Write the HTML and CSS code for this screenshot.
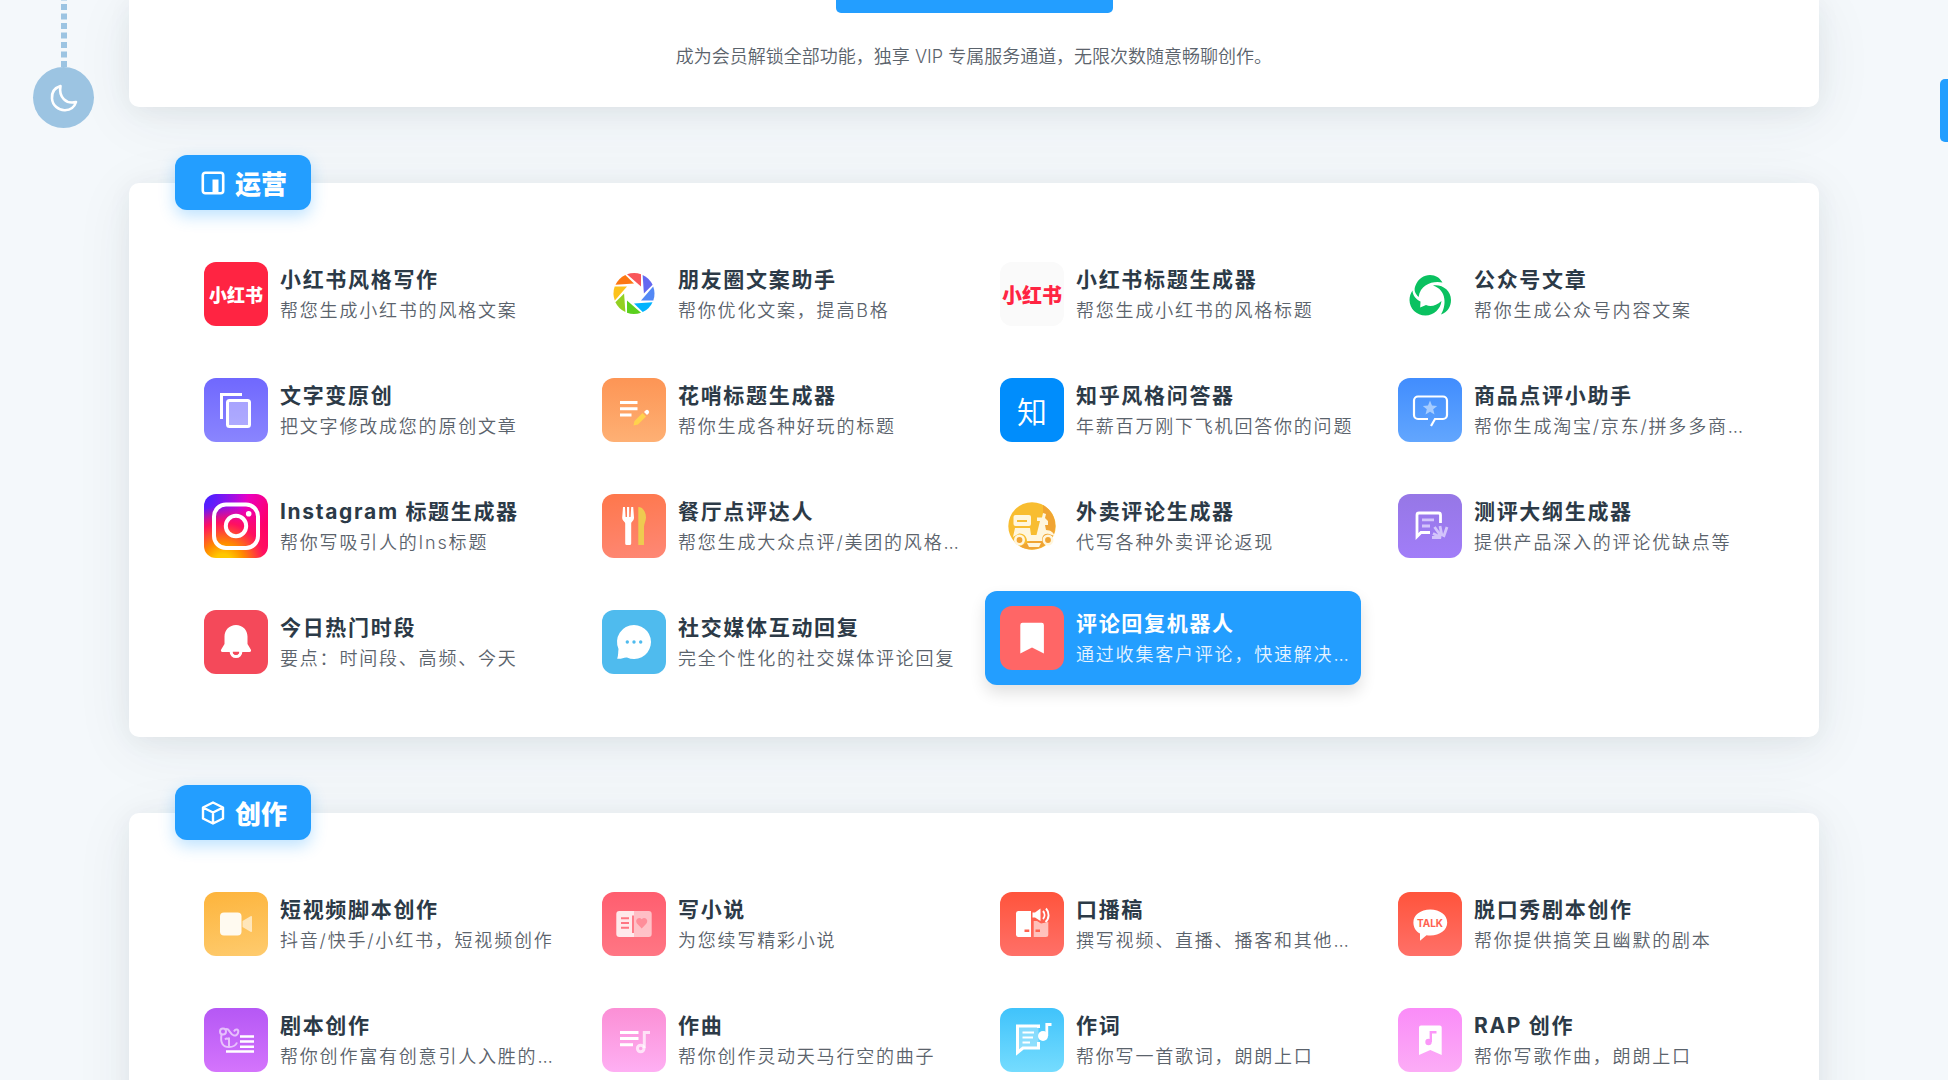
FILE: index.html
```html
<!DOCTYPE html>
<html lang="zh-CN">
<head>
    <meta charset="utf-8">
    <title>AI 创作</title>
    <link rel="stylesheet" href="styles.css">
</head>
<body>
    <!-- dark mode pull switch -->
    <div class="pull">
        <svg class="pull-rope" width="6" height="67" viewBox="0 0 6 67"><path d="M3 67V0" stroke="#9cc4e2" stroke-width="6" stroke-dasharray="6 3.5"/></svg>
        <button class="pull-btn" aria-label="夜间模式">
            <svg width="32" height="32" viewBox="0 0 32 32" fill="none" stroke="#fff" stroke-width="2.6" stroke-linejoin="round"><path d="M12.500 4C6 6 3.600 11 4 16.500C4.500 23.500 10.500 28.500 17 28.200C22.500 28 26.500 25 28 20C18 22.500 10.500 15 12.500 4Z"/></svg>
        </button>
    </div>
    <button class="side-tab" aria-label="侧边栏"></button>

    <main>
        <section class="card vip">
            <button class="vip-btn" aria-label="开通会员"></button>
            <p>成为会员解锁全部功能，独享 VIP 专属服务通道，无限次数随意畅聊创作。</p>
        </section>

        <section class="card">
            <h2 class="tab">
                <svg width="24" height="24" viewBox="0 0 24 24"><rect x="1.800" y="1.800" width="20.400" height="20.400" rx="2.500" fill="none" stroke="#fff" stroke-width="2.600"/><path d="M11.500 8.500h6V22h-6z" fill="#fff"/></svg>
                运营
            </h2>
            <div class="grid">
                <a class="item" href="#">
                    <span class="icon xhs">小红书</span>
                    <span class="info"><b>小红书风格写作</b><span class="desc">帮您生成小红书的风格文案</span></span>
                </a>
                <a class="item" href="#">
                    <svg class="icon" viewBox="0 0 64 64">
                        <defs><path id="blade" d="M-7 -19.200L7 -7V-19.300A20.500 20.500 0 0 0 -7 -19.200Z"/></defs>
                        <g transform="translate(32 31.500)">
                            <use href="#blade" fill="#f9565a"/>
                            <use href="#blade" fill="#6467f0" transform="rotate(45)"/>
                            <use href="#blade" fill="#5388f5" transform="rotate(90)"/>
                            <use href="#blade" fill="#00b3fe" transform="rotate(135)"/>
                            <use href="#blade" fill="#5bd01e" transform="rotate(180)"/>
                            <use href="#blade" fill="#93d021" transform="rotate(225)"/>
                            <use href="#blade" fill="#fcc21b" transform="rotate(270)"/>
                            <use href="#blade" fill="#fd7712" transform="rotate(315)"/>
                        </g>
                    </svg>
                    <span class="info"><b>朋友圈文案助手</b><span class="desc">帮你优化文案，提高B格</span></span>
                </a>
                <a class="item" href="#">
                    <span class="icon xhs-light">小红书</span>
                    <span class="info"><b>小红书标题生成器</b><span class="desc">帮您生成小红书的风格标题</span></span>
                </a>
                <a class="item" href="#">
                    <svg class="icon" viewBox="0 0 64 64" fill="#0ac160">
                        <path d="M20.600 35C17 31.500 15.500 28 17.500 23.500C20 17 26 13 32 13C37.500 13 42 15.800 44.500 20.600C35.500 18.500 22.500 22 20.600 35Z"/>
                        <path d="M35 23.600C44 22 53 28.500 53 38C53 44.500 49.500 50.500 43 52.500C48.500 44 49 28 35 23.600Z"/>
                        <path d="M14.500 28.500C14.500 33.500 18.500 37.500 22.500 39.600L22.200 45.500L28 43C33 45.500 38 43.500 43.500 39C42.500 47 36 53.500 27.500 53.500C18.500 53.500 11.500 46.500 11.500 38C11.500 34.500 12.500 31.500 14.500 28.500Z"/>
                    </svg>
                    <span class="info"><b>公众号文章</b><span class="desc">帮你生成公众号内容文案</span></span>
                </a>

                <a class="item" href="#">
                    <svg class="icon bg-indigo" viewBox="0 0 64 64" fill="none" stroke="#fff" stroke-width="3">
                        <path d="M38 16.500H17.500V41"/>
                        <rect x="23.500" y="22.500" width="22" height="26" rx="2" fill="#fff" fill-opacity=".35"/>
                    </svg>
                    <span class="info"><b>文字变原创</b><span class="desc">把文字修改成您的原创文章</span></span>
                </a>
                <a class="item" href="#">
                    <svg class="icon bg-orange" viewBox="0 0 64 64" fill="none" stroke-width="3">
                        <path d="M18 24.500H35.500M18 30.700H35.500M18 37H29.500" stroke="#fff"/>
                        <path d="M31.500 47.500L32.500 43L40.500 35L44 38.500L36 46.500Z" fill="#ffd24d"/>
                        <path d="M42 34L43.500 32.500A2 2 0 0 1 46.500 35.500L45 37Z" fill="#fff"/>
                    </svg>
                    <span class="info"><b>花哨标题生成器</b><span class="desc">帮你生成各种好玩的标题</span></span>
                </a>
                <a class="item" href="#">
                    <span class="icon zhihu">知</span>
                    <span class="info"><b>知乎风格问答器</b><span class="desc">年薪百万刚下飞机回答你的问题</span></span>
                </a>
                <a class="item" href="#">
                    <svg class="icon bg-blue" viewBox="0 0 64 64" fill="none">
                        <path d="M30 41H20a4 4 0 0 1 -4 -4V22.500a4 4 0 0 1 4 -4H45a4 4 0 0 1 4 4V37a4 4 0 0 1 -4 4H37L33 48" stroke="#fff" stroke-width="2.200"/>
                        <path d="M32 22.500l2 5 5.200.4-4 3.400 1.300 5.200-4.500-2.800-4.500 2.800 1.300-5.200-4-3.400 5.200-.4z" fill="#a5ccff"/>
                    </svg>
                    <span class="info"><b>商品点评小助手</b><span class="desc">帮你生成淘宝/京东/拼多多商品点评</span></span>
                </a>

                <a class="item" href="#">
                    <svg class="icon bg-ins" viewBox="0 0 64 64" fill="none" stroke="#fff" stroke-width="4">
                        <rect x="10" y="10.500" width="44" height="43.500" rx="12"/>
                        <circle cx="32" cy="32" r="10.200"/>
                        <circle cx="44.700" cy="19.700" r="2.800" fill="#fff" stroke="none"/>
                    </svg>
                    <span class="info"><b>Instagram 标题生成器</b><span class="desc">帮你写吸引人的Ins标题</span></span>
                </a>
                <a class="item" href="#">
                    <svg class="icon bg-coral" viewBox="0 0 64 64">
                        <path d="M21 13h2l.600 10h1.400V13h2.200V23h1.400L29.200 13h2L32 23.500C32 27 29.200 27.500 29.200 29.500V49.500a1.600 1.600 0 0 1 -1.600 1.600H24.800a1.600 1.600 0 0 1 -1.600 -1.600V29.500C23.200 27.500 20.200 27 20.200 23.500Z" fill="#fff"/>
                        <path d="M36.300 13C41 13 44 18 44 23.500C44 27.500 42 29 42 33V51H36.300Z" fill="#eecb50"/>
                    </svg>
                    <span class="info"><b>餐厅点评达人</b><span class="desc">帮您生成大众点评/美团的风格点评文案</span></span>
                </a>
                <a class="item" href="#">
                    <svg class="icon" viewBox="0 0 64 64">
                        <circle cx="32" cy="32" r="23.700" fill="#f8bd30"/>
                        <path d="M43 11A23.700 23.700 0 0 1 20 52.500L43 40Z" fill="#f0a433"/>
                        <g fill="#fff6dd">
                            <rect x="13.500" y="21" width="17.500" height="11" rx="2"/>
                            <path d="M15 34H30L31 41H36.500L40 27H37V23.500H42L43 19L46 20L45 24L48 27V31H45L46 36C51 36 54 39 54.500 42L49 40C44 39 42 42 42 47H27C27 42 23 39 19 39.500L13 43Z"/>
                            <path d="M27 49H41L39 53H29Z"/>
                        </g>
                        <path d="M17 27H27" stroke="#f8bd30" stroke-width="1.800"/>
                        <circle cx="19.500" cy="46" r="4.200" fill="#f0a433" stroke="#fff6dd" stroke-width="2.600"/>
                        <circle cx="48" cy="46" r="4.200" fill="#f0a433" stroke="#fff6dd" stroke-width="2.600"/>
                    </svg>
                    <span class="info"><b>外卖评论生成器</b><span class="desc">代写各种外卖评论返现</span></span>
                </a>
                <a class="item" href="#">
                    <svg class="icon bg-violet" viewBox="0 0 64 64" fill="none" stroke-width="2.800">
                        <path d="M32 38.500H23L19 42.500V21a2 2 0 0 1 2 -2H40.500a2 2 0 0 1 2 2V29" stroke="#fff"/>
                        <path d="M24 25.800H36M24 32H32" stroke="#d3c4fb"/>
                        <path d="M36.500 33L43 42M42 32L44 42M49 33L45.500 43M35 39.500L43 43.500H34" stroke="#d3c4fb"/>
                    </svg>
                    <span class="info"><b>测评大纲生成器</b><span class="desc">提供产品深入的评论优缺点等</span></span>
                </a>

                <a class="item" href="#">
                    <svg class="icon bg-red" viewBox="0 0 64 64" fill="#fff">
                        <path d="M32 15C38.500 15 43.500 20 43.500 26.500V34L46.800 39.500C47.600 41 46.800 42 45.500 42H18.500C17.200 42 16.400 41 17.200 39.500L20.500 34V26.500C20.500 20 25.500 15 32 15Z"/>
                        <path d="M27.200 41.500a4.800 5 0 0 0 9.600 0" fill="none" stroke="#fff" stroke-width="3.200"/>
                        <path d="M28.800 41.800h6.400a3.200 2.800 0 0 1 -6.400 0z" fill="#f4495a"/>
                    </svg>
                    <span class="info"><b>今日热门时段</b><span class="desc">要点：时间段、高频、今天</span></span>
                </a>
                <a class="item" href="#">
                    <svg class="icon bg-sky" viewBox="0 0 64 64" fill="#fff">
                        <path d="M32 15A17 17 0 1 1 25 47.500C22 47 19 49.500 15.200 48.700C16.500 45 16 42 16.500 39A17 17 0 0 1 32 15Z"/>
                        <g fill="#4fbbee"><circle cx="25.300" cy="32" r="1.700"/><circle cx="32" cy="32" r="1.700"/><circle cx="38.700" cy="32" r="1.700"/></g>
                    </svg>
                    <span class="info"><b>社交媒体互动回复</b><span class="desc">完全个性化的社交媒体评论回复</span></span>
                </a>
                <a class="item active" href="#">
                    <svg class="icon bg-rose" viewBox="0 0 64 64" fill="#fff">
                        <path d="M22.500 16.700h19.200a2.200 2.200 0 0 1 2.200 2.200V47.500L32 41.500L20.300 47.500V18.900a2.200 2.200 0 0 1 2.200 -2.200z"/>
                    </svg>
                    <span class="info"><b>评论回复机器人</b><span class="desc">通过收集客户评论，快速解决客户问题</span></span>
                </a>
            </div>
        </section>

        <section class="card">
            <h2 class="tab">
                <svg width="24" height="24" viewBox="0 0 24 24" fill="none" stroke="#fff" stroke-width="2.400" stroke-linejoin="round"><path d="M12 1.500L22 6.500V17.500L12 22.500L2 17.500V6.500ZM2 6.500L12 11.500L22 6.500M12 11.500V22.500"/></svg>
                创作
            </h2>
            <div class="grid">
                <a class="item" href="#">
                    <svg class="icon bg-amber" viewBox="0 0 64 64" fill="#fffaf0">
                        <rect x="16" y="20.500" width="21.500" height="23" rx="4"/>
                        <path d="M38.500 29L46.500 24.200Q48 23.500 48 25V39Q48 40.500 46.500 39.800L38.500 35Z" opacity=".65"/>
                    </svg>
                    <span class="info"><b>短视频脚本创作</b><span class="desc">抖音/快手/小红书，短视频创作</span></span>
                </a>
                <a class="item" href="#">
                    <svg class="icon bg-pinkred" viewBox="0 0 64 64" fill="#fff">
                        <path d="M17.300 19H32V45H17.300a3 3 0 0 1 -3 -3V22a3 3 0 0 1 3 -3z" opacity=".85"/>
                        <path d="M32 19H46.700a3 3 0 0 1 3 3V42a3 3 0 0 1 -3 3H32z" opacity=".58"/>
                        <path d="M19 26.300H27M19 31H27M19 35.700H27M31 23.500V41" stroke="#ff7583" stroke-width="1.900"/>
                        <path d="M39.700 36.500L35.500 32C32 28.500 36.500 24 39.700 27.200C43 24 47.500 28.500 44 32Z" fill="#ff8d99"/>
                    </svg>
                    <span class="info"><b>写小说</b><span class="desc">为您续写精彩小说</span></span>
                </a>
                <a class="item" href="#">
                    <svg class="icon bg-tomato" viewBox="0 0 64 64" fill="#fff">
                        <path d="M18.500 19H31V45H18.500a2.500 2.500 0 0 1 -2.500 -2.500V21.500a2.500 2.500 0 0 1 2.500 -2.500z"/>
                        <path d="M33.700 29H37L41 31.500L48.300 30V42.500a2.500 2.500 0 0 1 -2.500 2.500H33.700z" opacity=".6"/>
                        <path d="M24.500 38.700H29.300M35.500 38.700H40" stroke="#ff6350" stroke-width="2.400"/>
                        <path d="M32.500 20.500H35L40.500 16.500V29L35 25.500H32.500Z"/>
                        <path d="M43 19a6 6 0 0 1 0 8M46 16.500a9.500 9.500 0 0 1 -.500 13.500" fill="none" stroke="#fff" stroke-width="1.900"/>
                    </svg>
                    <span class="info"><b>口播稿</b><span class="desc">撰写视频、直播、播客和其他口播稿件</span></span>
                </a>
                <a class="item" href="#">
                    <svg class="icon bg-tomato" viewBox="0 0 64 64" fill="#fff">
                        <path d="M32.300 17.500C42 17.500 49.200 23 49.200 30.500C49.200 38 42 43.500 32.300 43.500C31 43.500 29.500 43.400 28.500 43.200L22 48.700V41.500C18 39.500 15.400 35.500 15.400 30.500C15.400 23 22.500 17.500 32.300 17.500Z"/>
                        <text class="talk" x="32" y="34.500">TALK</text>
                    </svg>
                    <span class="info"><b>脱口秀剧本创作</b><span class="desc">帮你提供搞笑且幽默的剧本</span></span>
                </a>

                <a class="item" href="#">
                    <svg class="icon bg-purple" viewBox="0 0 64 64" fill="none" stroke="#fff" stroke-width="2.400">
                        <path d="M36 28.500H50M36 33.500H50M36 38.700H50M22 43.500H50"/>
                        <g stroke-width="2" opacity=".6">
                            <circle cx="19" cy="23.500" r="3"/>
                            <path d="M21.500 21.500C25 19 26 27 30 27.500C34 28 35.500 22.500 33 21.500C31 21 30.500 22.500 30 23.500M17.500 26.500C16 35 19 39 25 39C29 39 32 37 33 34.500M25 29.500V39M21 31.500C22 30.500 23.500 30.500 24.500 31"/>
                        </g>
                    </svg>
                    <span class="info"><b>剧本创作</b><span class="desc">帮你创作富有创意引人入胜的剧本内容</span></span>
                </a>
                <a class="item" href="#">
                    <svg class="icon bg-pink" viewBox="0 0 64 64" fill="none" stroke="#fff" stroke-width="3">
                        <path d="M18 24.500H36.500M18 30.500H36.500M18 36.700H31"/>
                        <path d="M48 24.500H42.300V40" opacity=".7"/>
                        <circle cx="38.700" cy="40.500" r="3.300" opacity=".7"/>
                    </svg>
                    <span class="info"><b>作曲</b><span class="desc">帮你创作灵动天马行空的曲子</span></span>
                </a>
                <a class="item" href="#">
                    <svg class="icon bg-cyan" viewBox="0 0 64 64" fill="none" stroke="#fff" stroke-width="3">
                        <path d="M38.500 20V18H17.500V44.500L23 40H38.500V34" fill="#fff" fill-opacity=".3"/>
                        <path d="M22.500 24.500H34M22.500 29.500H33M22.500 34.500H30" stroke-width="2.200"/>
                        <circle cx="43" cy="28" r="5" fill="#fff" stroke="none"/>
                        <path d="M46.800 28V16.500H51.500" stroke-width="2.800"/>
                    </svg>
                    <span class="info"><b>作词</b><span class="desc">帮你写一首歌词，朗朗上口</span></span>
                </a>
                <a class="item" href="#">
                    <svg class="icon bg-orchid" viewBox="0 0 64 64">
                        <path d="M23 17.500H41.700a2 2 0 0 1 2 2V47L32.300 42L21 47V19.500a2 2 0 0 1 2 -2z" fill="#fff"/>
                        <circle cx="30.500" cy="34" r="3.200" fill="#fb97f8"/>
                        <path d="M32.800 34V24.200H38.500" fill="none" stroke="#fb97f8" stroke-width="2.400"/>
                    </svg>
                    <span class="info"><b>RAP 创作</b><span class="desc">帮你写歌作曲，朗朗上口</span></span>
                </a>
            </div>
        </section>
    </main>
</body>
</html>
```
FILE: styles.css
```css
* {
    box-sizing: border-box;
}

body {
    margin: 0;
    height: 100vh;
    overflow: hidden;
    background: #f4f8fb;
    color: #2c3a47;
    font-family: Inter, "Noto Sans CJK SC", sans-serif;
}

button {
    border: none;
    padding: 0;
    cursor: pointer;
}

main {
    padding: 0 129px;
}

.card {
    background: #fff;
    border-radius: 10px;
    margin-bottom: 76px;
    padding: 0 60px 48px;
    box-shadow: 0 10px 60px rgba(40, 60, 70, .07), 0 4px 24px rgba(40, 50, 50, .06);
}

/* vip banner */
.vip {
    display: flex;
    flex-direction: column;
    align-items: center;
    border-radius: 0 0 10px 10px;
    padding-bottom: 35px;
}

.vip-btn {
    width: 277px;
    height: 13px;
    background: #239eff;
    border-radius: 0 0 5px 5px;
}

.vip p {
    margin: 29px 0 0;
    font-size: 18px;
    line-height: 30px;
    font-weight: 350;
    color: #5b636c;
}

/* section title */
.tab {
    display: flex;
    align-items: center;
    gap: 10px;
    width: max-content;
    height: 55px;
    margin: 0 0 36px -14px;
    padding: 0 24px 0 26px;
    position: relative;
    top: -28px;
    border-radius: 12px;
    background: #239eff;
    color: #fff;
    font-size: 26px;
    font-weight: 900;
    box-shadow: 0 6px 16px rgba(35, 158, 255, .3);
}

.card .tab + .grid {
    margin-top: -27px;
}

/* items */
.grid {
    display: grid;
    grid-template-columns: repeat(4, minmax(0, 1fr));
    gap: 22px;
}

.item {
    display: flex;
    align-items: center;
    gap: 12px;
    padding: 15px 0 15px 15px;
    border-radius: 12px;
    color: inherit;
    text-decoration: none;
}

.icon {
    flex: none;
    width: 64px;
    height: 64px;
    border-radius: 12px;
}

.info {
    min-width: 0;
    padding-top: 2px;
}

.info b,
.desc {
    display: block;
    overflow: hidden;
    white-space: nowrap;
    text-overflow: ellipsis;
}

.info b {
    font-size: 21px;
    line-height: 32px;
    font-weight: 700;
    letter-spacing: .08em;
}

.desc {
    font-size: 18px;
    line-height: 30px;
    font-weight: 350;
    letter-spacing: .1em;
    color: #5b636c;
}

.active {
    background: #239eff;
    color: #fff;
    transform: translateY(-4px);
    box-shadow: 0 8px 16px rgba(0, 0, 0, .12);
}

.active .desc {
    color: #e6f3ff;
}

/* icon backgrounds */
.xhs,
.xhs-light,
.zhihu {
    display: flex;
    align-items: center;
    justify-content: center;
    font-weight: 900;
    font-size: 18px;
    white-space: nowrap;
    color: #fff;
    background: #ff2442;
}

.xhs-light {
    font-size: 20px;
    color: #ff2442;
    background: #fafafa;
}

.zhihu {
    font-size: 30px;
    font-weight: 350;
    background: #008dfc;
}

.bg-indigo { background: linear-gradient(#7068fe, #8a85fe); }
.bg-orange { background: linear-gradient(#fd9555, #feb074); }
.bg-blue { background: linear-gradient(#418dfe, #62a6fe); }
.bg-coral { background: linear-gradient(170deg, #fe774b, #fe8876); }
.bg-violet { background: linear-gradient(#9677e6, #a17df8); }
.bg-red { background: #f4495a; }
.bg-sky { background: #4fbbee; }
.bg-rose { background: #ff6666; }
.bg-amber { background: linear-gradient(170deg, #fdb43c, #fecb6e); }
.bg-pinkred { background: linear-gradient(#ff5e6f, #ff7684); }
.bg-tomato { background: linear-gradient(#ff543c, #ff7068); }
.bg-purple { background: linear-gradient(#b558f5, #d474fc); }
.bg-pink { background: linear-gradient(#fb8fd5, #feaff3); }
.bg-cyan { background: linear-gradient(#40c3fb, #75dcfe); }
.bg-orchid { background: linear-gradient(#fa8cf8, #fcacf6); }

.bg-ins {
    background:
        radial-gradient(circle at 30% 110%, #ffc800 12%, #ff8a00 26%, #ff1060 50%, rgba(255, 0, 105, 0) 70%),
        radial-gradient(circle at 0 5%, #4f1fff 5%, rgba(79, 31, 255, 0) 50%),
        linear-gradient(115deg, #a010f0, #e800c8 45%, #ff0069 80%);
}

.talk {
    font-size: 10px;
    font-weight: 700;
    text-anchor: middle;
    fill: #ff6350;
}

/* floating controls */
.pull {
    position: absolute;
    left: 33px;
    top: 0;
    display: flex;
    flex-direction: column;
    align-items: center;
}

.pull-rope {
    display: block;
}

.pull-btn {
    display: flex;
    align-items: center;
    justify-content: center;
    width: 61px;
    height: 61px;
    border-radius: 50%;
    background: #9cc4e2;
}

.side-tab {
    position: absolute;
    right: 0;
    top: 79px;
    width: 8px;
    height: 63px;
    border-radius: 5px 0 0 5px;
    background: #239eff;
}
```
